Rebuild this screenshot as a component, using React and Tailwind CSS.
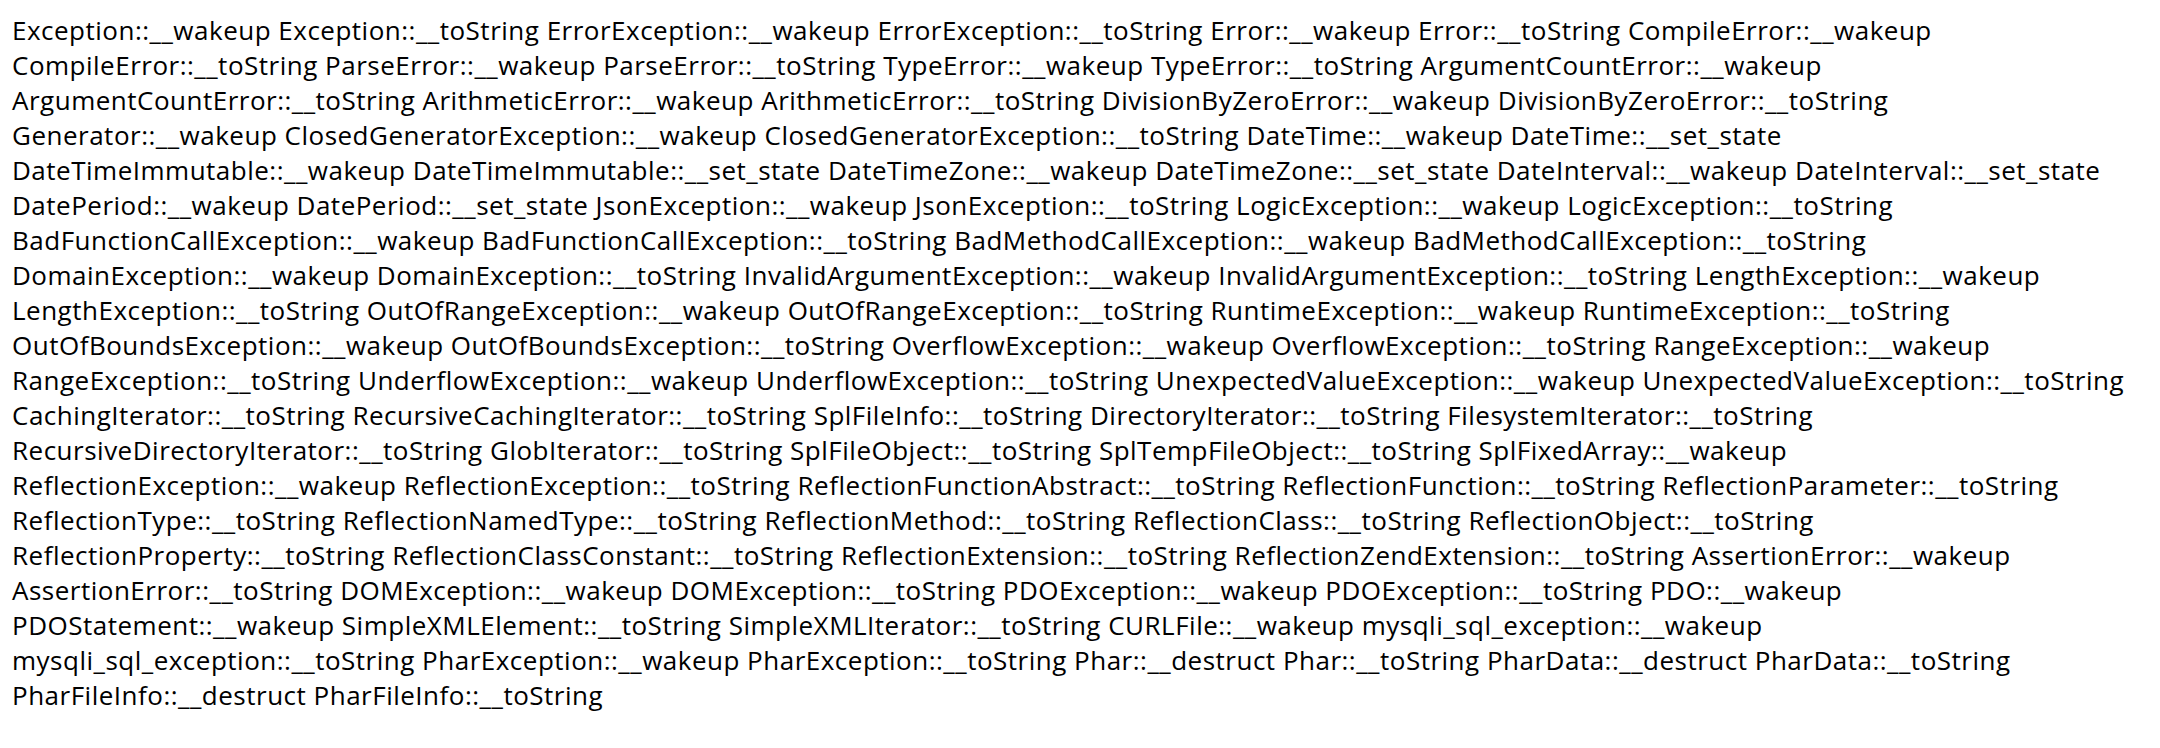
import React from "react";

const lines = [
  "Exception::__wakeup Exception::__toString ErrorException::__wakeup ErrorException::__toString Error::__wakeup Error::__toString CompileError::__wakeup",
  "CompileError::__toString ParseError::__wakeup ParseError::__toString TypeError::__wakeup TypeError::__toString ArgumentCountError::__wakeup",
  "ArgumentCountError::__toString ArithmeticError::__wakeup ArithmeticError::__toString DivisionByZeroError::__wakeup DivisionByZeroError::__toString",
  "Generator::__wakeup ClosedGeneratorException::__wakeup ClosedGeneratorException::__toString DateTime::__wakeup DateTime::__set_state",
  "DateTimeImmutable::__wakeup DateTimeImmutable::__set_state DateTimeZone::__wakeup DateTimeZone::__set_state DateInterval::__wakeup DateInterval::__set_state",
  "DatePeriod::__wakeup DatePeriod::__set_state JsonException::__wakeup JsonException::__toString LogicException::__wakeup LogicException::__toString",
  "BadFunctionCallException::__wakeup BadFunctionCallException::__toString BadMethodCallException::__wakeup BadMethodCallException::__toString",
  "DomainException::__wakeup DomainException::__toString InvalidArgumentException::__wakeup InvalidArgumentException::__toString LengthException::__wakeup",
  "LengthException::__toString OutOfRangeException::__wakeup OutOfRangeException::__toString RuntimeException::__wakeup RuntimeException::__toString",
  "OutOfBoundsException::__wakeup OutOfBoundsException::__toString OverflowException::__wakeup OverflowException::__toString RangeException::__wakeup",
  "RangeException::__toString UnderflowException::__wakeup UnderflowException::__toString UnexpectedValueException::__wakeup UnexpectedValueException::__toString",
  "CachingIterator::__toString RecursiveCachingIterator::__toString SplFileInfo::__toString DirectoryIterator::__toString FilesystemIterator::__toString",
  "RecursiveDirectoryIterator::__toString GlobIterator::__toString SplFileObject::__toString SplTempFileObject::__toString SplFixedArray::__wakeup",
  "ReflectionException::__wakeup ReflectionException::__toString ReflectionFunctionAbstract::__toString ReflectionFunction::__toString ReflectionParameter::__toString",
  "ReflectionType::__toString ReflectionNamedType::__toString ReflectionMethod::__toString ReflectionClass::__toString ReflectionObject::__toString",
  "ReflectionProperty::__toString ReflectionClassConstant::__toString ReflectionExtension::__toString ReflectionZendExtension::__toString AssertionError::__wakeup",
  "AssertionError::__toString DOMException::__wakeup DOMException::__toString PDOException::__wakeup PDOException::__toString PDO::__wakeup",
  "PDOStatement::__wakeup SimpleXMLElement::__toString SimpleXMLIterator::__toString CURLFile::__wakeup mysqli_sql_exception::__wakeup",
  "mysqli_sql_exception::__toString PharException::__wakeup PharException::__toString Phar::__destruct Phar::__toString PharData::__destruct PharData::__toString",
  "PharFileInfo::__destruct PharFileInfo::__toString",
];

export default function App() {
  return (
    <div className="min-h-screen bg-white pl-3 pt-[13px] text-black font-['Open_Sans',sans-serif] text-[26px] leading-[35px] tracking-[0.5px]">
      {lines.map((line, i) => (
        <div key={i} className="whitespace-nowrap">
          {line}
        </div>
      ))}
    </div>
  );
}
